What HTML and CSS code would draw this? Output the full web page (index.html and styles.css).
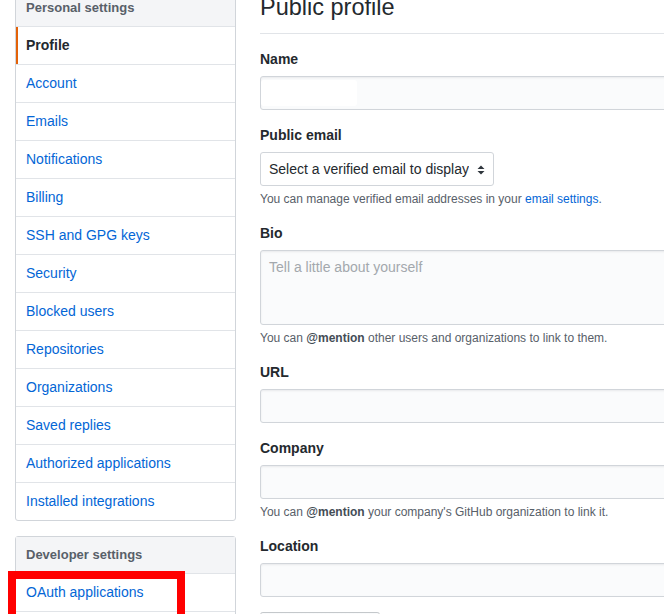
FILE: index.html
```html
<!DOCTYPE html>
<html lang="en">
<head>
<meta charset="utf-8">
<title>Public profile</title>
<link rel="stylesheet" href="styles.css">
</head>
<body>
<div class="page">
  <nav class="sidebar">
    <div class="menu">
      <h3 class="menu-heading">Personal settings</h3>
      <a class="menu-item selected" href="#">Profile</a>
      <a class="menu-item" href="#">Account</a>
      <a class="menu-item" href="#">Emails</a>
      <a class="menu-item" href="#">Notifications</a>
      <a class="menu-item" href="#">Billing</a>
      <a class="menu-item" href="#">SSH and GPG keys</a>
      <a class="menu-item" href="#">Security</a>
      <a class="menu-item" href="#">Blocked users</a>
      <a class="menu-item" href="#">Repositories</a>
      <a class="menu-item" href="#">Organizations</a>
      <a class="menu-item" href="#">Saved replies</a>
      <a class="menu-item" href="#">Authorized applications</a>
      <a class="menu-item" href="#">Installed integrations</a>
    </div>
    <div class="menu">
      <h3 class="menu-heading">Developer settings</h3>
      <a class="menu-item" href="#">OAuth applications</a>
      <a class="menu-item" href="#">Personal access tokens</a>
    </div>
  </nav>
  <main class="content">
    <h2 class="subhead">Public profile</h2>
    <div class="form-group">
      <label class="label">Name</label>
      <div class="input-wrap">
        <input class="form-control" type="text">
        <span class="redact"></span>
      </div>
    </div>
    <div class="form-group">
      <label class="label">Public email</label>
      <div class="select-wrap">
        <select class="form-select">
          <option>Select a verified email to display</option>
        </select>
        <svg class="select-arrow" width="8" height="10" viewBox="0 0 8 10"><path d="M4 0.5L7.5 4H0.5z M4 9.5L0.5 6H7.5z" fill="#2f363d"/></svg>
      </div>
      <p class="note">You can manage verified email addresses in your <a href="#">email settings</a>.</p>
    </div>
    <div class="form-group">
      <label class="label">Bio</label>
      <textarea class="form-control bio" placeholder="Tell a little about yourself"></textarea>
      <p class="note">You can <strong>@mention</strong> other users and organizations to link to them.</p>
    </div>
    <div class="form-group">
      <label class="label">URL</label>
      <input class="form-control" type="text">
    </div>
    <div class="form-group">
      <label class="label">Company</label>
      <input class="form-control" type="text">
      <p class="note">You can <strong>@mention</strong> your company's GitHub organization to link it.</p>
    </div>
    <div class="form-group">
      <label class="label">Location</label>
      <input class="form-control" type="text">
    </div>
    <p class="actions"><button class="btn" type="button">Update profile</button></p>
  </main>
</div>
<div class="annotation"></div>
</body>
</html>
```

FILE: styles.css
```css
html, body {
  margin: 0;
  padding: 0;
  overflow: hidden;
  background: #fff;
}

body {
  font-family: "Liberation Sans", Arial, sans-serif;
  font-size: 14px;
  line-height: 1.5;
  color: #24292e;
  width: 664px;
  height: 614px;
  position: relative;
}

.page {
  display: flex;
  gap: 24px;
  padding-left: 15px;
  margin-top: -11px;
  width: 1000px;
}

.sidebar {
  flex: 0 0 221px;
}

.menu {
  border: 1px solid #d1d5da;
  border-radius: 3px;
  background: #fff;
  margin-bottom: 15px;
}

.menu-heading {
  margin: 0;
  padding: 8px 10px;
  font-size: 13px;
  line-height: 20px;
  font-weight: bold;
  color: #586069;
  background: #f4f5f7;
  border-bottom: 1px solid #e1e4e8;
}

.menu-item {
  display: block;
  position: relative;
  padding: 8px 10px;
  line-height: 21px;
  color: #0366d6;
  text-decoration: none;
  border-bottom: 1px solid #e1e4e8;
}

.menu-item:last-child {
  border-bottom: none;
}

.menu-item.selected {
  color: #24292e;
  font-weight: bold;
}

.menu-item.selected::before {
  content: "";
  position: absolute;
  left: 0;
  top: 0;
  bottom: 0;
  width: 2px;
  background: #e36209;
}

.content {
  flex: 0 0 700px;
}

.subhead {
  margin: 0 0 15px;
  padding-bottom: 8px;
  font-size: 23.5px;
  line-height: 36px;
  font-weight: normal;
  color: #24292e;
  border-bottom: 1px solid #e1e4e8;
}

.form-group {
  margin: 15px 0;
}

.label {
  display: block;
  margin: 0 0 6px;
  font-weight: bold;
  line-height: 21px;
}

.form-control {
  display: block;
  box-sizing: border-box;
  width: 440px;
  height: 34px;
  margin: 0;
  padding: 6px 8px;
  font-family: inherit;
  font-size: 14px;
  line-height: 20px;
  color: #24292e;
  background: #fafbfc;
  border: 1px solid #d1d5da;
  border-radius: 3px;
  box-shadow: inset 0 1px 2px rgba(27, 31, 35, 0.075);
  outline: none;
}

.form-control::placeholder {
  color: #a3a8ad;
}

.bio {
  height: 75px;
  resize: none;
}

.input-wrap {
  position: relative;
  width: 440px;
}

.redact {
  position: absolute;
  left: 1px;
  top: 4px;
  width: 96px;
  height: 26px;
  background: #fff;
  border-radius: 3px;
}

.select-wrap {
  position: relative;
  display: inline-block;
  vertical-align: top;
}

.form-select {
  display: block;
  box-sizing: border-box;
  width: 234px;
  height: 34px;
  margin: 0;
  padding: 6px 24px 6px 8px;
  font-family: inherit;
  font-size: 14px;
  line-height: 20px;
  color: #24292e;
  background: #fff;
  border: 1px solid #d1d5da;
  border-radius: 3px;
  -webkit-appearance: none;
  appearance: none;
  outline: none;
}

.select-arrow {
  position: absolute;
  right: 9px;
  top: 13px;
  pointer-events: none;
}

.note {
  margin: 4px 0 2px;
  font-size: 12px;
  line-height: 18px;
  color: #586069;
}

.note a {
  color: #0366d6;
  text-decoration: none;
}

.note strong {
  color: #444d56;
}

.actions {
  margin: 15px 0;
}

.btn {
  display: inline-block;
  padding: 6px 12px;
  font-family: inherit;
  font-size: 14px;
  line-height: 20px;
  font-weight: bold;
  color: #24292e;
  background: linear-gradient(#fafbfc, #eff3f6 90%);
  border: 1px solid rgba(27, 31, 35, 0.2);
  border-radius: 3px;
}

.annotation {
  position: absolute;
  left: 8px;
  top: 571px;
  width: 161px;
  height: 60px;
  border: 8px solid #ff0000;
  background: transparent;
}
```
